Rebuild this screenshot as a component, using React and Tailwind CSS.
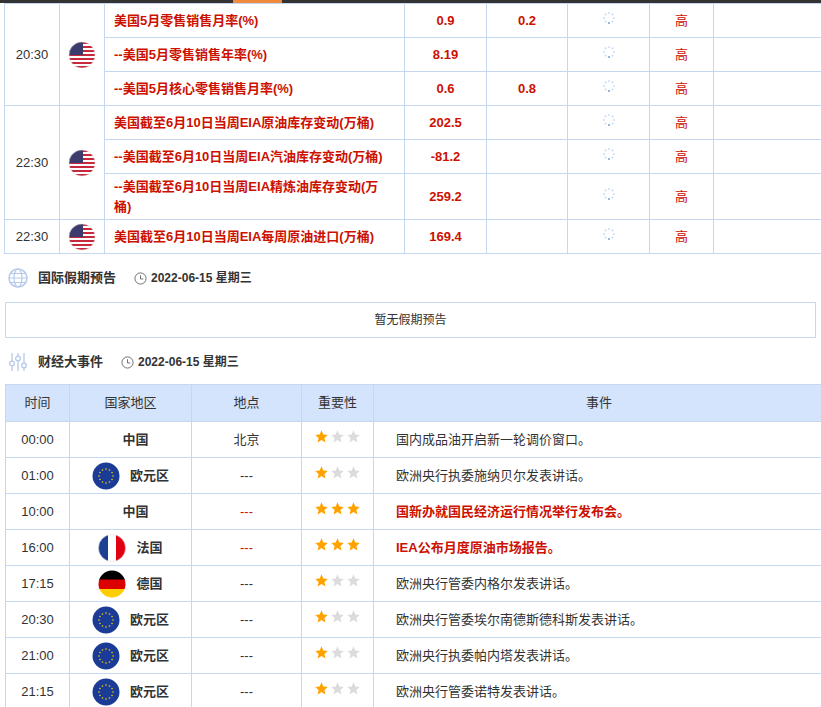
import React from "react";

const F = { fontFamily: '"Liberation Sans","Noto Sans CJK SC",sans-serif' };

function USFlag() {
  return (
    <svg width="28" height="28" viewBox="0 0 28 28" className="mx-auto">
      <defs><clipPath id="c"><circle cx="14" cy="14" r="13" /></clipPath></defs>
      <g clipPath="url(#c)">
        <rect width="28" height="28" fill="#fff" />
        {[0, 1, 2, 3, 4, 5, 6].map(i => <rect key={i} y={1 + i * 4} width="28" height="2" fill="#c8283c" />)}
        <rect width="15" height="14" fill="#3c3b6e" />
      </g>
      <circle cx="14" cy="14" r="13" fill="none" stroke="#ddd" strokeWidth="0.5" />
    </svg>
  );
}
function EUFlag() {
  return (
    <svg width="28" height="28" viewBox="0 0 28 28">
      <circle cx="14" cy="14" r="13.5" fill="#1b3c96" />
      {Array.from({ length: 12 }).map((_, i) => {
        const a = (i / 12) * Math.PI * 2;
        return <circle key={i} cx={14 + 7 * Math.cos(a)} cy={14 + 7 * Math.sin(a)} r="0.8" fill="#f5d000" />;
      })}
    </svg>
  );
}
function DEFlag() {
  return (
    <svg width="28" height="28" viewBox="0 0 28 28">
      <defs><clipPath id="d"><circle cx="14" cy="14" r="13.5" /></clipPath></defs>
      <g clipPath="url(#d)"><rect width="28" height="10" fill="#000" /><rect y="9.5" width="28" height="9.5" fill="#dd0000" /><rect y="19" width="28" height="9" fill="#ffce00" /></g>
    </svg>
  );
}
function FRFlag() {
  return (
    <svg width="28" height="28" viewBox="0 0 28 28">
      <defs><clipPath id="f"><circle cx="14" cy="14" r="13.5" /></clipPath></defs>
      <g clipPath="url(#f)"><rect width="10" height="28" fill="#1c3f94" /><rect x="10" width="8" height="28" fill="#fff" /><rect x="18" width="10" height="28" fill="#e1000f" /></g>
      <circle cx="14" cy="14" r="13.5" fill="none" stroke="#ddd" strokeWidth="0.5" />
    </svg>
  );
}
function Loader() {
  return (
    <svg width="14" height="14" viewBox="0 0 14 14" className="mx-auto -mt-[6px]">
      {Array.from({ length: 8 }).map((_, i) => {
        const a = (i / 8) * Math.PI * 2;
        return <circle key={i} cx={7 + 5 * Math.cos(a)} cy={7 + 5 * Math.sin(a)} r="1.1" fill={i === 2 ? "#7ea6dc" : "#cfe0f5"} />;
      })}
    </svg>
  );
}
function Star({ on }) {
  return (
    <svg width="15" height="15" viewBox="0 0 24 24"><path d="M12 2l2.9 6.9 7.1.6-5.4 4.7 1.7 7.3L12 17.6 5.7 21.5l1.7-7.3L2 9.5l7.1-.6z" fill={on ? "#ffa200" : "#dcdcdc"} /></svg>
  );
}
function Clock() {
  return (
    <svg width="13" height="13" viewBox="0 0 14 14"><circle cx="7" cy="7" r="6" fill="none" stroke="#666" strokeWidth="1" /><path d="M7 3.5V7.5H10" fill="none" stroke="#666" strokeWidth="1" /></svg>
  );
}

const B = "border border-[#c6d7f0]";
const red = "text-[#cc1100] font-bold";

const top = [
  { t: "20:30", rows: [["美国5月零售销售月率(%)", "0.9", "0.2"], ["--美国5月零售销售年率(%)", "8.19", ""], ["--美国5月核心零售销售月率(%)", "0.6", "0.8"]] },
  { t: "22:30", rows: [["美国截至6月10日当周EIA原油库存变动(万桶)", "202.5", ""], ["--美国截至6月10日当周EIA汽油库存变动(万桶)", "-81.2", ""], ["--美国截至6月10日当周EIA精炼油库存变动(万桶)", "259.2", "", true]] },
  { t: "22:30", rows: [["美国截至6月10日当周EIA每周原油进口(万桶)", "169.4", ""]] },
];

const events = [
  ["00:00", null, "中国", "北京", 1, "国内成品油开启新一轮调价窗口。"],
  ["01:00", "eu", "欧元区", "---", 1, "欧洲央行执委施纳贝尔发表讲话。"],
  ["10:00", null, "中国", "---", 3, "国新办就国民经济运行情况举行发布会。"],
  ["16:00", "fr", "法国", "---", 3, "IEA公布月度原油市场报告。"],
  ["17:15", "de", "德国", "---", 1, "欧洲央行管委内格尔发表讲话。"],
  ["20:30", "eu", "欧元区", "---", 1, "欧洲央行管委埃尔南德斯德科斯发表讲话。"],
  ["21:00", "eu", "欧元区", "---", 1, "欧洲央行执委帕内塔发表讲话。"],
  ["21:15", "eu", "欧元区", "---", 1, "欧洲央行管委诺特发表讲话。"],
];
const flags = { eu: <EUFlag />, fr: <FRFlag />, de: <DEFlag /> };

export default function App() {
  return (
    <div style={F} className="w-[821px] h-[707px] overflow-hidden bg-white text-[13px] text-[#333]">
      <div className="h-[3px] bg-[#333] relative"><div className="absolute left-[233px] w-[49px] h-[3px] bg-[#f08a3c]" /></div>
      <table className="border-collapse ml-[4px] table-fixed w-[830px]">
        <colgroup>
          <col className="w-[55px]" /><col className="w-[45px]" /><col className="w-[300px]" /><col className="w-[82px]" /><col className="w-[81px]" /><col className="w-[82px]" /><col className="w-[64px]" /><col className="w-[121px]" />
        </colgroup>
        <tbody>
          {top.map((g, gi) =>
            g.rows.map((r, ri) => (
              <tr key={gi + "-" + ri} className={r[3] ? "h-[46px]" : "h-[34px]"}>
                {ri === 0 && <td rowSpan={g.rows.length} className={B + " text-center"}>{g.t}</td>}
                {ri === 0 && <td rowSpan={g.rows.length} className={B}><USFlag /></td>}
                <td className={B + " px-[9px] leading-[20px] " + red}>{r[0]}</td>
                <td className={B + " text-center " + red}>{r[1]}</td>
                <td className={B + " text-center " + red}>{r[2]}</td>
                <td className={B}><Loader /></td>
                <td className={B + " text-center text-[#cc1100]"}>高</td>
                <td className={B}></td>
              </tr>
            ))
          )}
        </tbody>
      </table>

      <div className="flex items-center h-[48px] pl-[8px] gap-[10px]">
        <svg width="20" height="20" viewBox="0 0 20 20"><circle cx="10" cy="10" r="9" fill="none" stroke="#b5c9ea" strokeWidth="1.5" /><ellipse cx="10" cy="10" rx="4" ry="9" fill="none" stroke="#b5c9ea" strokeWidth="1.2" /><path d="M1 10H19M2.5 5.5H17.5M2.5 14.5H17.5" stroke="#b5c9ea" strokeWidth="1.2" /></svg>
        <span className="font-bold text-[#333] text-[13px]">国际假期预告</span>
        <span className="flex items-center gap-[4px] ml-[8px] font-bold text-[12px]"><Clock />2022-06-15 星期三</span>
      </div>
      <div className={"mx-[5px] h-[36px] flex items-center justify-center text-[12px] " + B}>暂无假期预告</div>
      <div className="flex items-center h-[48px] pl-[8px] gap-[10px]">
        <svg width="20" height="20" viewBox="0 0 20 20" fill="none" stroke="#b5c9ea" strokeWidth="1.3"><path d="M4 1V9M4 14V19M10 1V4M10 9V19M16 1V11M16 16V19" /><circle cx="4" cy="11.5" r="2.3" /><circle cx="10" cy="6.5" r="2.3" /><circle cx="16" cy="13.5" r="2.3" /></svg>
        <span className="font-bold text-[#333]">财经大事件</span>
        <span className="flex items-center gap-[4px] ml-[8px] font-bold text-[12px]"><Clock />2022-06-15 星期三</span>
      </div>
      <table className="border-collapse ml-[5px] -mt-[2px] table-fixed w-[820px]">
        <colgroup>
          <col className="w-[64px]" /><col className="w-[122px]" /><col className="w-[110px]" /><col className="w-[72px]" /><col />
        </colgroup>
        <thead>
          <tr className="h-[37px] bg-[#d3e4fc]">
            {["时间", "国家地区", "地点", "重要性", "事件"].map(h => <th key={h} className={B + " font-normal text-center"}>{h}</th>)}
          </tr>
        </thead>
        <tbody>
          {events.map((e, i) => (
            <tr key={i} className="h-[36px]">
              <td className={B + " text-center"}>{e[0]}</td>
              <td className={B}>
                <div className="flex items-center justify-center gap-[10px] font-bold">
                  {e[1] && flags[e[1]]}<span className={e[1] ? "" : "pl-[10px]"}>{e[2]}</span>
                </div>
              </td>
              <td className={B + " text-center " + (e[4] === 3 ? "text-[#cc1100]" : "")}>{e[3]}</td>
              <td className={B}>
                <div className="flex justify-center gap-[1px] -mt-[6px]">{[0, 1, 2].map(k => <Star key={k} on={k < e[4]} />)}</div>
              </td>
              <td className={B + " pl-[22px] " + (e[4] === 3 ? "text-[#cc1100] font-bold" : "")}>{e[5]}</td>
            </tr>
          ))}
        </tbody>
      </table>
    </div>
  );
}
